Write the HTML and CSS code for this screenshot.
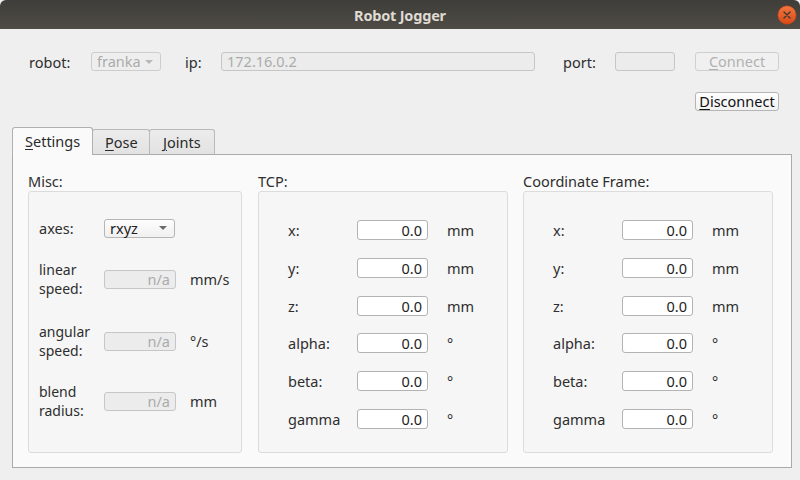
FILE: index.html
```html
<!DOCTYPE html>
<html>
<head>
<meta charset="utf-8">
<title>Robot Jogger</title>
<link rel="stylesheet" href="styles.css">
</head>
<body>
<div class="titlebar">
  <span></span>
  <span class="title">Robot Jogger</span>
  <svg class="close" width="20" height="20" viewBox="0 0 20 20">
    <defs>
      <linearGradient id="cg" x1="0" y1="0" x2="0" y2="1">
        <stop offset="0" stop-color="#f3763f"/>
        <stop offset="1" stop-color="#d94a17"/>
      </linearGradient>
    </defs>
    <circle cx="10" cy="10" r="9.2" fill="url(#cg)" stroke="#b8401a" stroke-width="0.6"/>
    <path d="M7 7 L13 13 M13 7 L7 13" stroke="#3a3935" stroke-width="1.4" stroke-linecap="round"/>
  </svg>
</div>

<div class="conn-row">
  <span class="lbl lbl-robot">robot:</span>
  <div class="combo combo-disabled combo-franka"><span>franka</span><i class="arrow"></i></div>
  <span class="lbl lbl-ip">ip:</span>
  <div class="edit edit-disabled edit-ip">172.16.0.2</div>
  <span class="lbl lbl-port">port:</span>
  <div class="edit edit-disabled edit-port"></div>
  <div class="btn btn-disabled btn-connect"><u>C</u>onnect</div>
</div>

<div class="row2">
  <div class="btn btn-disconnect"><u>D</u>isconnect</div>
</div>

<div class="tabbar">
  <div class="tab tab-active tab-settings"><u>S</u>ettings</div>
  <div class="tab tab-pose"><u>P</u>ose</div>
  <div class="tab tab-joints"><u>J</u>oints</div>
</div>

<div class="pane">
  <div class="col col-misc">
    <div class="ghead">Misc:</div>
    <div class="gbox misc-box">
      <div class="mrow mrow-1">
        <span class="mlabel">axes:</span>
        <div class="combo combo-axes"><span>rxyz</span><i class="arrow arrow-dark"></i></div>
      </div>
      <div class="mrow mrow-2">
        <span class="mlabel"><span class="ml">linear</span><span class="ml">speed:</span></span>
        <div class="edit edit-disabled edit-na">n/a</div>
        <span class="munit">mm/s</span>
      </div>
      <div class="mrow mrow-3">
        <span class="mlabel"><span class="ml">angular</span><span class="ml">speed:</span></span>
        <div class="edit edit-disabled edit-na">n/a</div>
        <span class="munit">°/s</span>
      </div>
      <div class="mrow mrow-4">
        <span class="mlabel"><span class="ml">blend</span><span class="ml">radius:</span></span>
        <div class="edit edit-disabled edit-na">n/a</div>
        <span class="munit">mm</span>
      </div>
    </div>
  </div>

  <div class="col col-tcp">
    <div class="ghead">TCP:</div>
    <div class="gbox pose-box">
      <div class="prow"><span class="plabel">x:</span><div class="edit edit-val">0.0</div><span class="punit">mm</span></div>
      <div class="prow"><span class="plabel">y:</span><div class="edit edit-val">0.0</div><span class="punit">mm</span></div>
      <div class="prow"><span class="plabel">z:</span><div class="edit edit-val">0.0</div><span class="punit">mm</span></div>
      <div class="prow"><span class="plabel">alpha:</span><div class="edit edit-val">0.0</div><span class="punit">°</span></div>
      <div class="prow"><span class="plabel">beta:</span><div class="edit edit-val">0.0</div><span class="punit">°</span></div>
      <div class="prow"><span class="plabel">gamma</span><div class="edit edit-val">0.0</div><span class="punit">°</span></div>
    </div>
  </div>

  <div class="col col-cf">
    <div class="ghead">Coordinate Frame:</div>
    <div class="gbox pose-box">
      <div class="prow"><span class="plabel">x:</span><div class="edit edit-val">0.0</div><span class="punit">mm</span></div>
      <div class="prow"><span class="plabel">y:</span><div class="edit edit-val">0.0</div><span class="punit">mm</span></div>
      <div class="prow"><span class="plabel">z:</span><div class="edit edit-val">0.0</div><span class="punit">mm</span></div>
      <div class="prow"><span class="plabel">alpha:</span><div class="edit edit-val">0.0</div><span class="punit">°</span></div>
      <div class="prow"><span class="plabel">beta:</span><div class="edit edit-val">0.0</div><span class="punit">°</span></div>
      <div class="prow"><span class="plabel">gamma</span><div class="edit edit-val">0.0</div><span class="punit">°</span></div>
    </div>
  </div>
</div>
</body>
</html>
```

FILE: styles.css
```css
* { box-sizing: border-box; }
html, body { margin: 0; padding: 0; }
body {
  width: 800px;
  height: 480px;
  overflow: hidden;
  background: #efefef;
  font-family: "Noto Sans", "DejaVu Sans", sans-serif;
  font-size: 14.5px;
  color: #2e2e2e;
}
u { text-decoration: underline; text-underline-offset: 2px; }

/* title bar */
.titlebar {
  height: 29px;
  background: linear-gradient(#3e3d39, #4f4c46);
  border-radius: 6px 6px 0 0;
  display: grid;
  grid-template-columns: 1fr auto 1fr;
  align-items: center;
}
.title {
  color: #dfdbd2;
  font-weight: bold;
  font-size: 14.5px;
  letter-spacing: -0.2px;
}
.close { justify-self: end; margin-right: 3px; margin-top: 1px; }

/* connection row */
.conn-row {
  display: flex;
  align-items: center;
  height: 19px;
  margin-top: 23px;
  padding-left: 29px;
}
.lbl { white-space: nowrap; }
.lbl-robot { width: 62px; }
.lbl-ip { width: 36px; margin-left: 24px; }
.lbl-port { width: 52px; margin-left: 28px; }

.combo {
  height: 19px;
  border: 1px solid #b5b5b5;
  border-radius: 3px;
  background: linear-gradient(#fdfdfd, #f0f0f0);
  display: flex;
  align-items: center;
  justify-content: space-between;
  padding: 0 7px 0 5px;
  line-height: 17px;
}
.combo-franka { width: 70px; }
.combo-disabled {
  border-color: #cdcdcd;
  background: #eeeeee;
  color: #ababab;
}
.arrow {
  width: 0; height: 0;
  border-left: 4px solid transparent;
  border-right: 4px solid transparent;
  border-top: 4px solid #b8b8b8;
}
.arrow-dark { border-top-color: #6b6b6b; }

.edit {
  height: 19px;
  border: 1px solid #b3b3b3;
  border-radius: 3px;
  background: #fff;
  line-height: 17px;
  padding: 0 5px;
  white-space: nowrap;
}
.edit-disabled {
  border-color: #c6c6c6;
  background: #ececec;
  color: #ababab;
}
.edit-ip { width: 314px; }
.edit-port { width: 60px; }

.btn {
  height: 19px;
  width: 84px;
  border: 1px solid #b5b5b5;
  border-radius: 3px;
  background: linear-gradient(#fefefe, #f1f1f1);
  text-align: center;
  line-height: 17px;
  color: #222;
}
.btn-connect { margin-left: 20px; }
.btn-disabled { color: #b0b0b0; border-color: #cfcfcf; background: #f0f0f0; }

.row2 {
  display: flex;
  justify-content: flex-end;
  margin-top: 21px;
  padding-right: 21px;
}
.btn-disconnect { color: #111; }

/* tabs */
.tabbar {
  display: flex;
  align-items: flex-end;
  height: 27px;
  margin-top: 16px;
  padding-left: 12px;
}
.tab {
  height: 25px;
  border: 1px solid #b9b9b9;
  border-bottom: none;
  border-radius: 3px 3px 0 0;
  background: linear-gradient(#ececec, #e2e2e2);
  padding-left: 12px;
  line-height: 24px;
  color: #2a2a2a;
}
.tab-active {
  height: 28px;
  margin-bottom: -1px;
  background: #fafafa;
  border-color: #b0b0b0;
  position: relative;
  z-index: 1;
  line-height: 27px;
}
.tab-settings { width: 81px; }
.tab-pose { width: 58px; margin-left: -1px; }
.tab-joints { width: 66px; margin-left: -1px; padding-left: 13px; }

/* pane */
.pane {
  margin-left: 12px;
  width: 780px;
  height: 314px;
  border: 1px solid #ababab;
  background: #fafafa;
  display: flex;
  padding: 16px 0 0 15px;
}
.col { display: flex; flex-direction: column; }
.col-misc { width: 214px; }
.col-tcp { width: 250px; margin-left: 16px; }
.col-cf { width: 250px; margin-left: 15px; }
.ghead { height: 20px; line-height: 20px; white-space: nowrap; }
.gbox {
  height: 262px;
  border: 1px solid #dcdcdc;
  border-radius: 3px;
  background: #f6f6f6;
}

/* misc */
.misc-box { padding: 18px 0 0 10px; }
.mrow {
  display: flex;
  align-items: center;
  height: 36px;
}
.mrow-2 { margin-top: 15px; }
.mrow-3 { margin-top: 26px; }
.mrow-4 { margin-top: 24px; }
.mlabel { width: 65px; display: flex; flex-direction: column; justify-content: center; }
.ml { display: block; font-size: 14px; height: 19.2px; line-height: 19.2px; }
.combo-axes { width: 71px; color: #222; }
.edit-na { width: 72px; text-align: right; }
.munit { margin-left: 14px; }

/* pose boxes */
.pose-box {
  padding: 28px 0 0 29px;
  display: flex;
  flex-direction: column;
  gap: 17.8px;
}
.prow {
  display: flex;
  align-items: center;
  height: 20px;
}
.plabel { width: 69px; }
.edit-val {
  width: 71px;
  height: 20px;
  line-height: 18px;
  text-align: right;
  color: #222;
}
.punit { margin-left: 19px; }
```
